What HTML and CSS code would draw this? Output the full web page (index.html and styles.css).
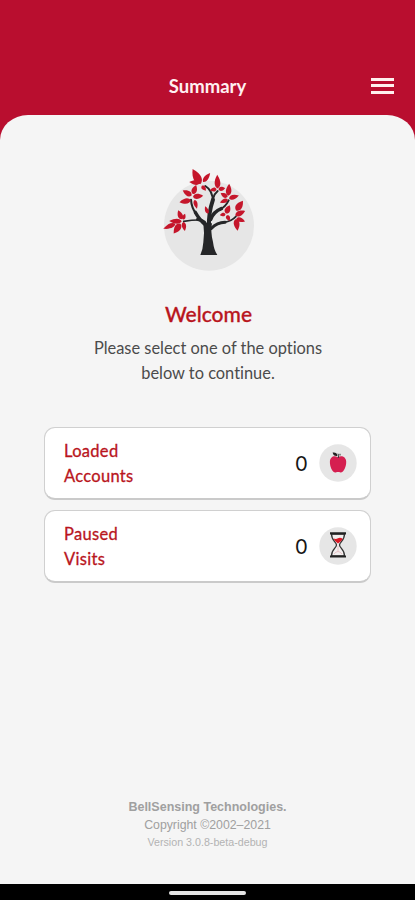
FILE: index.html
```html
<!DOCTYPE html>
<html lang="en">
<head>
<meta charset="utf-8">
<title>Summary</title>
<link rel="stylesheet" href="styles.css">
</head>
<body>
<header class="header">
  <span></span>
  <h1 class="title">Summary</h1>
  <button class="menu" aria-label="Menu"><i></i><i></i><i></i></button>
</header>
<main class="sheet">
  <svg class="tree" viewBox="0 0 330 345">
    <defs><path id="leaf" d="M0 1C-8-3-11-15 0-33C11-15 8-3 0 1Z"/></defs>
    <circle cx="162" cy="197" r="135" fill="#e6e6e6"/>
    <g fill="none" stroke="#252628" stroke-linecap="round">
      <path d="M157 205Q151 180 128 178" stroke-width="10"/>
      <path d="M130 180Q112 180 86 184" stroke-width="5"/>
      <path d="M154 197Q135 182 121 157" stroke-width="10"/>
      <path d="M124 163Q109 142 108 119" stroke-width="6"/>
      <path d="M162 200Q160 160 174 119" stroke-width="12"/>
      <path d="M174 125Q173 91 151 78" stroke-width="6"/>
      <path d="M174 116Q178 101 188 93" stroke-width="6"/>
      <path d="M167 178Q176 155 199 146" stroke-width="11"/>
      <path d="M195 148Q211 141 221 121" stroke-width="6"/>
      <path d="M169 205Q186 188 210 187" stroke-width="9"/>
      <path d="M207 187Q231 183 243 169" stroke-width="5"/>
    </g>
    <path d="M145 190H171Q166 216 174 246Q177 271 187 285H136Q144 267 145 247Q149 218 145 190Z" fill="#252628"/>
    <g fill="#c5162b">
      <use href="#leaf" transform="translate(136 71)rotate(-28)scale(1.65 1.5)"/>
      <use href="#leaf" transform="translate(145 65)rotate(38)scale(.95 1)"/>
      <use href="#leaf" transform="translate(134 69)rotate(-84)scale(.95 .95)"/>
      <use href="#leaf" transform="translate(141 78)rotate(140)scale(.85 .55)"/>
      <use href="#leaf" transform="translate(114 101)rotate(20)scale(1.1 .85)"/>
      <use href="#leaf" transform="translate(109 106)rotate(-60)scale(1.1 .9)"/>
      <use href="#leaf" transform="translate(106 121)rotate(-100)scale(1.1 1)"/>
      <use href="#leaf" transform="translate(115 110)rotate(84)scale(1.1 .9)"/>
      <use href="#leaf" transform="translate(119 121)rotate(165)scale(.8 .8)"/>
      <use href="#leaf" transform="translate(188 84)rotate(-2)scale(1.2 1.2)"/>
      <use href="#leaf" transform="translate(184 87)rotate(-102)scale(.85 .6)"/>
      <use href="#leaf" transform="translate(191 88)rotate(80)scale(.85 .6)"/>
      <use href="#leaf" transform="translate(220 106)rotate(4)scale(1.15 1.05)"/>
      <use href="#leaf" transform="translate(217 111)rotate(-60)scale(.9 .7)"/>
      <use href="#leaf" transform="translate(223 115)rotate(74)scale(1 .9)"/>
      <use href="#leaf" transform="translate(218 119)rotate(-110)scale(.9 .75)"/>
      <use href="#leaf" transform="translate(244 151)rotate(35)scale(1.35 1.05)"/>
      <use href="#leaf" transform="translate(213 160)rotate(25)scale(1.15 .8)"/>
      <use href="#leaf" transform="translate(211 163)rotate(-96)scale(.75 .5)"/>
      <use href="#leaf" transform="translate(216 166)rotate(155)scale(.85 .55)"/>
      <use href="#leaf" transform="translate(242 166)rotate(65)scale(1.1 .95)"/>
      <use href="#leaf" transform="translate(245 176)rotate(108)scale(.95 .8)"/>
      <use href="#leaf" transform="translate(243 178)rotate(172)scale(1.2 1.05)"/>
      <use href="#leaf" transform="translate(80 177)rotate(-22)scale(1.05 .85)"/>
      <use href="#leaf" transform="translate(79 184)rotate(-88)scale(1.05 1.1)"/>
      <use href="#leaf" transform="translate(60 192)rotate(-112)scale(1 1.15)"/>
      <use href="#leaf" transform="translate(76 192)rotate(-145)scale(1.3 1.05)"/>
      <use href="#leaf" transform="translate(85 187)rotate(170)scale(.9 .8)"/>
      <use href="#leaf" transform="translate(84 178)rotate(20)scale(.7 .55)"/>
      <use href="#leaf" transform="translate(159 160)rotate(-22)scale(.75 .7)"/>
    </g>
  </svg>
  <h2 class="welcome">Welcome</h2>
  <p class="intro">Please select one of the options<br>below to continue.</p>
  <section class="cards">
    <a class="card">
      <span class="label">Loaded<br>Accounts</span>
      <span class="count">0</span>
      <svg class="icon" viewBox="0 0 38 38">
        <circle cx="19" cy="19" r="18.7" fill="#e6e6e6"/>
        <path d="M18.8 13.3C22 10.8 27 12.5 27.2 17.5C27.4 22.5 24.8 28.6 21.5 28.4C19.5 28 18.5 28 16.8 28.4C13.3 28.8 10.7 22.5 10.9 17.5C11.1 12.6 15.5 10.7 18.8 13.3Z" fill="#d51f50"/>
        <path d="M19.2 14Q20 11.5 19 9.7M21 11.5V9.8" stroke="#333" stroke-width="1" fill="none"/>
        <path d="M13.6 8.6Q18 8 18.5 12Q14.5 12.7 13.6 8.6Z" fill="#222"/>
      </svg>
    </a>
    <a class="card">
      <span class="label">Paused<br>Visits</span>
      <span class="count">0</span>
      <svg class="icon" viewBox="0 0 38 38">
        <circle cx="19" cy="19" r="18.7" fill="#e6e6e6"/>
        <path d="M12.5 7C12.5 14 17.5 15 17.5 18S12.5 22 12.5 29H25.5C25.5 22 20.5 21 20.5 18S25.5 14 25.5 7Z" fill="#f1eeee" stroke="#333" stroke-width="1.3"/>
        <path d="M14.5 11.5Q17 12.5 19 11.3T23.7 11.7Q23 14 19 16.5Q15.3 14 14.5 11.5Z" fill="#d91925"/>
        <path d="M19 19V25M15 27Q19 22 23 27" stroke="#e8c4c7" fill="none"/>
        <path d="M11 6.4H27M11 29.5H27" stroke="#222" stroke-width="2.1"/>
      </svg>
    </a>
  </section>
  <footer class="footer">
    <strong class="company">BellSensing Technologies.</strong>
    <span class="copyright">Copyright ©2002–2021</span>
    <span class="version">Version 3.0.8-beta-debug</span>
  </footer>
</main>
<div class="navbar"><span class="handle"></span></div>
</body>
</html>
```
FILE: styles.css
```css
* { box-sizing: border-box; }
body {
  margin: 0;
  height: 900px;
  display: flex;
  flex-direction: column;
  background: #b90e2f;
  font-family: Lato, sans-serif;
  font-variant-ligatures: none;
  overflow: hidden;
}
.header {
  height: 115px;
  padding: 56px 20px 0;
  display: grid;
  grid-template-columns: 24px 1fr 24px;
  align-items: center;
}
.title {
  margin: 0;
  text-align: center;
  color: #fff0f1;
  font-size: 18.5px;
  line-height: 24px;
  font-weight: 700;
}
.menu {
  display: grid;
  gap: 3.5px;
  width: 23px;
  padding: 0;
  border: 0;
  background: none;
}
.menu i { height: 3px; background: #fff0ee; }
.sheet {
  flex: 1;
  display: flex;
  flex-direction: column;
  align-items: center;
  padding-top: 45px;
  background: #f5f5f5;
  border-radius: 28px 28px 0 0 / 25px 25px 0 0;
}
.tree { width: 110px; height: 115px; margin-left: 5px; }
.welcome {
  margin: 25px 0 0;
  padding-left: 2px;
  color: #b9151d;
  font-size: 21px;
  line-height: 28px;
  font-weight: 500;
  -webkit-text-stroke: .3px #b9151d;
}
.intro {
  margin: 7px 0 0;
  padding-left: 1px;
  color: #4b4b4b;
  font-size: 16.4px;
  line-height: 25px;
  text-align: center;
}
.cards { display: grid; gap: 10px; width: 327px; margin-top: 42px; }
.card {
  height: 73px;
  display: flex;
  align-items: center;
  padding: 0 13px 0 19px;
  border: 1px solid #d0d0d0;
  border-bottom: 2px solid #cacaca;
  border-radius: 11px;
  background: #fff;
}
.label {
  flex: 1;
  padding-top: 2px;
  color: #b9151d;
  font-size: 16.5px;
  line-height: 25.5px;
  letter-spacing: .3px;
  -webkit-text-stroke: .3px #b9151d;
}
.count {
  margin-right: 11px;
  color: #161616;
  font-size: 22px;
  line-height: 26px;
  transform: scaleX(.92);
}
.icon { width: 38px; height: 38px; }
.footer {
  margin: auto 0 34px;
  display: flex;
  flex-direction: column;
  align-items: center;
  color: #a0a0a0;
  font-family: "Liberation Sans", sans-serif;
}
.company { font-size: 12.5px; line-height: 18px; }
.copyright { font-size: 12.3px; line-height: 18px; }
.version { color: #b3b3b3; font-size: 10.7px; line-height: 16px; }
.navbar {
  height: 16px;
  display: flex;
  justify-content: center;
  padding-top: 7px;
  background: #000;
}
.handle { width: 77px; height: 4px; border-radius: 2px; background: #e5e5e5; }
```
